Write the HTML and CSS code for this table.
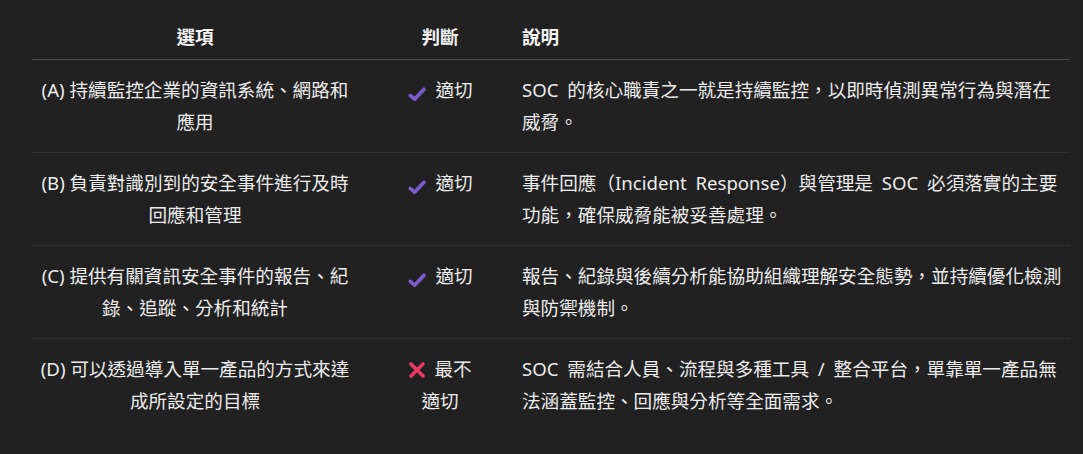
FILE: index.html
```html
<!DOCTYPE html>
<html lang="zh-Hant">
<head>
<meta charset="utf-8">
<title>SOC 選項判斷</title>
<link rel="stylesheet" href="styles.css">
</head>
<body>
<table class="grid">
  <colgroup>
    <col class="c-opt">
    <col class="c-judge">
    <col class="c-desc">
  </colgroup>
  <thead>
    <tr>
      <th class="opt">選項</th>
      <th class="judge">判斷</th>
      <th class="desc">說明</th>
    </tr>
  </thead>
  <tbody>
    <tr>
      <td class="opt">(A) 持續監控企業的資訊系統、網路和應用</td>
      <td class="judge"><svg class="ico check" viewBox="0 0 20 16" aria-hidden="true"><path d="M3.2 9.4 L7.6 13.2 L17 3.2" /></svg>適切</td>
      <td class="desc">SOC 的核心職責之一就是持續監控，以即時偵測異常行為與潛在威脅。</td>
    </tr>
    <tr>
      <td class="opt">(B) 負責對識別到的安全事件進行及時回應和管理</td>
      <td class="judge"><svg class="ico check" viewBox="0 0 20 16" aria-hidden="true"><path d="M3.2 9.4 L7.6 13.2 L17 3.2" /></svg>適切</td>
      <td class="desc">事件回應（Incident Response）與管理是 SOC 必須落實的主要功能，確保威脅能被妥善處理。</td>
    </tr>
    <tr>
      <td class="opt">(C) 提供有關資訊安全事件的報告、紀錄、追蹤、分析和統計</td>
      <td class="judge"><svg class="ico check" viewBox="0 0 20 16" aria-hidden="true"><path d="M3.2 9.4 L7.6 13.2 L17 3.2" /></svg>適切</td>
      <td class="desc">報告、紀錄與後續分析能協助組織理解安全態勢，並持續優化檢測與防禦機制。</td>
    </tr>
    <tr>
      <td class="opt">(D) 可以透過導入單一產品的方式來達成所設定的目標</td>
      <td class="judge"><svg class="ico cross" viewBox="0 0 18 18" aria-hidden="true"><path d="M3 3 L15 15 M15 3 L3 15" /></svg>最不適切</td>
      <td class="desc">SOC 需結合人員、流程與多種工具 / 整合平台，單靠單一產品無法涵蓋監控、回應與分析等全面需求。</td>
    </tr>
  </tbody>
</table>
</body>
</html>
```

FILE: styles.css
```css
html, body {
  margin: 0;
  background: #212121;
}

body {
  padding: 8px 13px 0 32px;
  color: #ececec;
  font-family: "Noto Sans", "Noto Sans CJK TC", sans-serif;
  font-size: 18.6px;
  line-height: 32px;
}

.grid {
  width: 1038px;
  table-layout: fixed;
  border-collapse: collapse;
}

.c-opt { width: 326px; }
.c-judge { width: 164px; }
.c-desc { width: 548px; }

th {
  font-weight: 700;
  color: #f3f3f3;
  padding: 13px 0 6px;
  border-bottom: 1px solid #4a4a4a;
}

td {
  vertical-align: top;
  padding: 14px 0;
  border-bottom: 1px solid #303030;
}

tbody tr:last-child td {
  border-bottom: none;
}

.opt {
  text-align: center;
  padding-left: 2px;
  padding-right: 2px;
}

.judge {
  text-align: center;
  padding-left: 44px;
  padding-right: 44px;
}

.desc {
  text-align: left;
  padding-left: 0;
  padding-right: 7px;
}

td.desc {
  word-spacing: 4px;
}

.ico {
  display: inline-block;
  vertical-align: -5px;
  margin-right: 8px;
  fill: none;
  stroke-linecap: round;
  stroke-linejoin: round;
}

.check {
  width: 20px;
  height: 16px;
  stroke: #7a5bd0;
  stroke-width: 3.6;
}

.cross {
  width: 18px;
  height: 18px;
  vertical-align: -3px;
  stroke: #ea3a64;
  stroke-width: 3.6;
}
```
